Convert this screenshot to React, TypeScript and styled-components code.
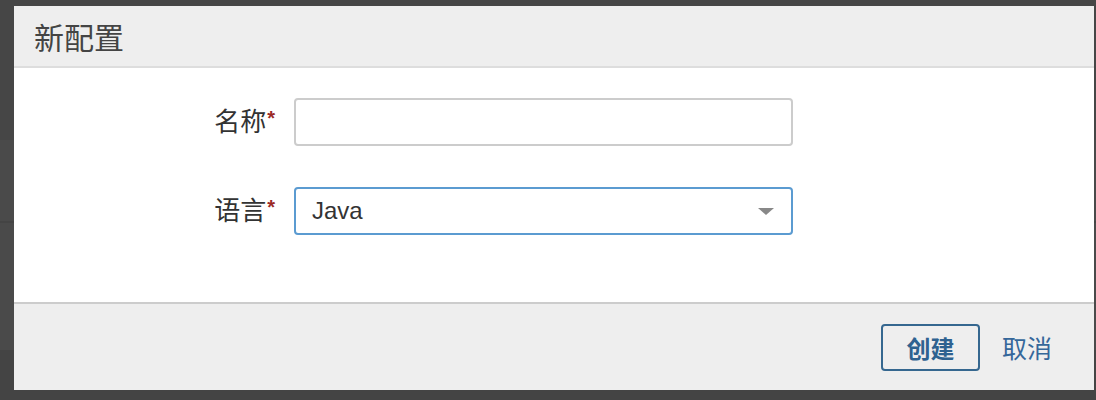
import React from 'react';
import styled, { createGlobalStyle } from 'styled-components';

const GlobalStyle = createGlobalStyle`
  html, body {
    margin: 0;
    padding: 0;
  }
  body {
    width: 1096px;
    height: 400px;
    overflow: hidden;
    font-family: "Liberation Sans", "Noto Sans CJK SC", sans-serif;
    background: linear-gradient(
      to bottom,
      #464646 0px,
      #464646 140px,
      #4a4a4a 140px,
      #4a4a4a 221px,
      #444444 221px,
      #444444 223px,
      #4a4a4a 223px,
      #4a4a4a 350px,
      #444444 350px
    );
  }
`;

const Backdrop = styled.div`
  padding: 6px 2px 0 14px;
`;

const Dialog = styled.div`
  width: 1080px;
  height: 384px;
  display: flex;
  flex-direction: column;
  background: #fff;
`;

const Header = styled.div`
  height: 60px;
  display: flex;
  align-items: center;
  padding: 0 20px;
  background: #eeeeee;
  border-bottom: 2px solid #dddddd;
`;

const Title = styled.h3`
  margin: 0;
  font-size: 30px;
  font-weight: 400;
  color: #444;
`;

const Body = styled.div`
  flex: 1;
  display: flex;
  flex-direction: column;
  gap: 41px;
  padding: 30px 0 0;
`;

const Row = styled.div`
  display: flex;
  align-items: center;
  gap: 19px;
`;

const Label = styled.label`
  width: 261px;
  margin-bottom: 6px;
  text-align: right;
  font-size: 26px;
  color: #333;
`;

const Required = styled.span`
  color: #9b2a26;
  font-size: 20px;
  font-weight: 700;
  vertical-align: 6px;
  margin-left: 1px;
`;

const TextInput = styled.input<{ $focused?: boolean }>`
  box-sizing: border-box;
  width: 499px;
  height: 48px;
  padding: 0 16px;
  border: 2px solid ${p => (p.$focused ? '#5b9bd1' : '#cccccc')};
  border-radius: 4px;
  font: inherit;
  font-size: 24px;
  color: #333;
  outline: none;
  background: #fff;
`;

const SelectBox = styled.div`
  box-sizing: border-box;
  width: 499px;
  height: 48px;
  padding: 0 16px;
  display: flex;
  align-items: center;
  justify-content: space-between;
  border: 2px solid #5b9bd1;
  border-radius: 4px;
  font-size: 24px;
  color: #333;
`;

const Caret = styled.span`
  width: 0;
  height: 0;
  border-left: 8px solid transparent;
  border-right: 8px solid transparent;
  border-top: 7px solid #888;
  margin-right: 1px;
`;

const Footer = styled.div`
  height: 88px;
  box-sizing: border-box;
  display: flex;
  align-items: center;
  justify-content: flex-end;
  gap: 22px;
  padding: 0 42px 0 0;
  background: #eeeeee;
  border-top: 2px solid #cccccc;
`;

const Button = styled.button`
  box-sizing: border-box;
  width: 99px;
  height: 47px;
  border: 2px solid #35678f;
  border-radius: 4px;
  background: transparent;
  font-family: inherit;
  font-size: 24px;
  font-weight: 700;
  color: #2e6290;
`;

const LinkButton = styled.a`
  font-size: 25px;
  color: #35679a;
  text-decoration: none;
`;

export default function App() {
  return (
    <>
      <GlobalStyle />
      <Backdrop>
        <Dialog>
          <Header>
            <Title>新配置</Title>
          </Header>
          <Body>
            <Row>
              <Label>
                名称<Required>*</Required>
              </Label>
              <TextInput />
            </Row>
            <Row>
              <Label>
                语言<Required>*</Required>
              </Label>
              <SelectBox>
                <span>Java</span>
                <Caret />
              </SelectBox>
            </Row>
          </Body>
          <Footer>
            <Button>创建</Button>
            <LinkButton>取消</LinkButton>
          </Footer>
        </Dialog>
      </Backdrop>
    </>
  );
}
